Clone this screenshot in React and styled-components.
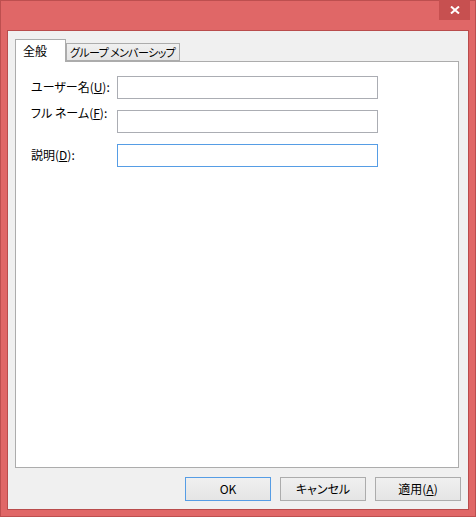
import React from "react";
import styled, { createGlobalStyle } from "styled-components";

const GlobalStyle = createGlobalStyle`
  html, body {
    margin: 0;
    padding: 0;
    background: #ffffff;
  }
  body {
    font-family: "Noto Sans CJK JP", "Noto Sans", sans-serif;
    font-size: 12px;
    font-feature-settings: "palt";
    color: #000;
  }
`

const Window = styled.div`
  box-sizing: border-box;
  width: 476px;
  height: 517px;
  border: 1px solid #bd4f4f;
  background: #e06767;
  display: flex;
  flex-direction: column;
`

const TitleBar = styled.div`
  height: 29px;
  display: flex;
  justify-content: flex-end;
  align-items: flex-start;
`

const CloseButton = styled.div`
  width: 31px;
  height: 20px;
  margin: -1px 5px 0 0;
  background: #c75050;
  display: flex;
  align-items: center;
  justify-content: center;
`

const Client = styled.div`
  flex: 1;
  margin: 0 6px 6px 6px;
  border: 1px solid #b94c4c;
  background: #f0f0f0;
  display: flex;
  flex-direction: column;
  padding: 8px 7px 8px 7px;
`

const TabRow = styled.div`
  display: flex;
  align-items: flex-end;
  height: 22px;
  position: relative;
  z-index: 2;
`

const Tab = styled.div`
  box-sizing: border-box;
  width: ${p => p.$width}px;
  height: ${p => (p.$active ? 23 : 18)}px;
  margin-bottom: ${p => (p.$active ? -1 : 0)}px;
  padding: ${p => (p.$active ? "3px 0 0 7px" : "0 0 0 3px")};
  border: 1px solid #acacac;
  border-bottom: ${p => (p.$active ? "none" : "1px solid #acacac")};
  background: ${p => (p.$active ? "#ffffff" : "linear-gradient(#f0f0f0, #e5e5e5)")};
  display: flex;
  align-items: ${p => (p.$active ? "flex-start" : "center")};
  font-size: ${p => (p.$active ? 12 : 11)}px;
  letter-spacing: ${p => (p.$active ? 0 : -0.6)}px;
  line-height: 16px;
  white-space: nowrap;
`

const Panel = styled.div`
  flex: 1;
  margin-right: 2px;
  border: 1px solid #acacac;
  background: #ffffff;
  padding: 13px 0 0 15px;
  display: flex;
  flex-direction: column;
  gap: 11px;
  position: relative;
  z-index: 1;
`

const Row = styled.div`
  display: grid;
  grid-template-columns: 86px 261px;
  grid-template-rows: 23px;
  align-items: center;
`

const Label = styled.label`
  line-height: 16px;
  white-space: nowrap;
  align-self: ${p => (p.$lift ? "start" : "center")};
  margin-top: ${p => (p.$lift ? -p.$lift : 0)}px;
`

const Input = styled.div`
  box-sizing: border-box;
  height: 23px;
  margin-top: 1px;
  border: 1px solid ${p => (p.$focused ? "#569de5" : "#abadb3")};
  background: #ffffff;
`

const ButtonBar = styled.div`
  display: flex;
  justify-content: flex-end;
  gap: 9px;
  margin-top: 9px;
`

const Button = styled.div`
  box-sizing: border-box;
  width: 86px;
  height: 24px;
  border: 1px solid ${p => (p.$default ? "#569de5" : "#acacac")};
  background: linear-gradient(#f0f0f0, #e5e5e5);
  display: flex;
  align-items: center;
  justify-content: center;
  line-height: 16px;
`

export default function App() {
  return (
    <>
      <GlobalStyle />
      <Window>
        <TitleBar>
          <CloseButton>
            <svg width="10" height="8" viewBox="0 0 10 8">
              <path d="M1 0.5 L9 7.5 M9 0.5 L1 7.5" stroke="#ffffff" strokeWidth="2" fill="none" />
            </svg>
          </CloseButton>
        </TitleBar>
        <Client>
          <TabRow>
            <Tab $active $width={51}>全般</Tab>
            <Tab $width={114}>グループ メンバーシップ</Tab>
          </TabRow>
          <Panel>
            <Row>
              <Label>ユーザー名(<u>U</u>):</Label>
              <Input />
            </Row>
            <Row>
              <Label $lift={4}>フル ネーム(<u>F</u>):</Label>
              <Input />
            </Row>
            <Row>
              <Label>説明(<u>D</u>):</Label>
              <Input $focused />
            </Row>
          </Panel>
          <ButtonBar>
            <Button $default>OK</Button>
            <Button>キャンセル</Button>
            <Button>適用(<u>A</u>)</Button>
          </ButtonBar>
        </Client>
      </Window>
    </>
  );
}
